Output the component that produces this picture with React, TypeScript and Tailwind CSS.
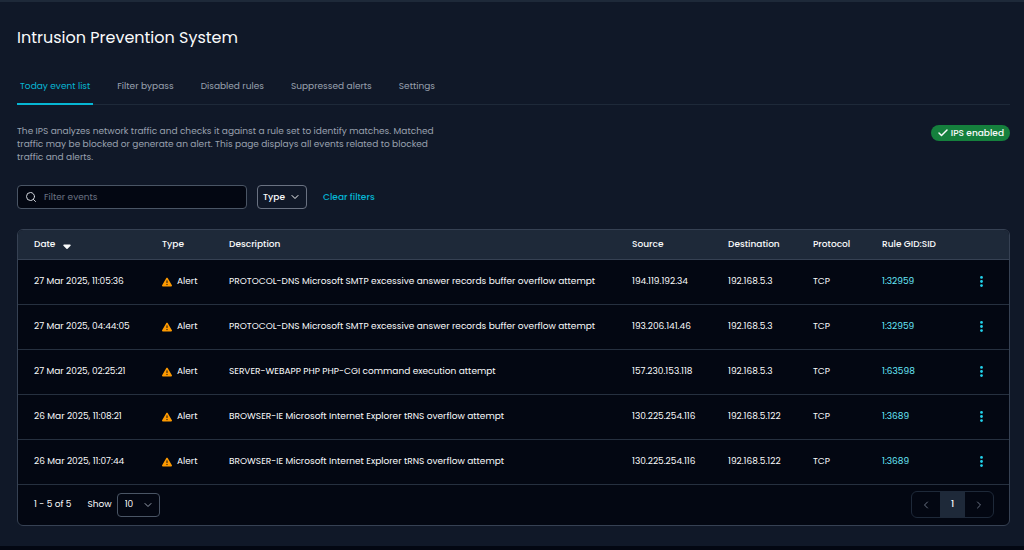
import { useState } from "react";
import { Check, ChevronDown, ChevronLeft, ChevronRight, Search } from "lucide-react";
import {
  FaCaretDown,
  FaEllipsisVertical,
  FaTriangleExclamation,
} from "react-icons/fa6";

interface IpsEvent {
  id: number;
  date: string;
  description: string;
  source: string;
  destination: string;
  protocol: string;
  rule: string;
}

const TABS = [
  "Today event list",
  "Filter bypass",
  "Disabled rules",
  "Suppressed alerts",
  "Settings",
];

const EVENTS: IpsEvent[] = [
  {
    id: 1,
    date: "27 Mar 2025, 11:05:36",
    description:
      "PROTOCOL-DNS Microsoft SMTP excessive answer records buffer overflow attempt",
    source: "194.119.192.34",
    destination: "192.168.5.3",
    protocol: "TCP",
    rule: "1:32959",
  },
  {
    id: 2,
    date: "27 Mar 2025, 04:44:05",
    description:
      "PROTOCOL-DNS Microsoft SMTP excessive answer records buffer overflow attempt",
    source: "193.206.141.46",
    destination: "192.168.5.3",
    protocol: "TCP",
    rule: "1:32959",
  },
  {
    id: 3,
    date: "27 Mar 2025, 02:25:21",
    description: "SERVER-WEBAPP PHP PHP-CGI command execution attempt",
    source: "157.230.153.118",
    destination: "192.168.5.3",
    protocol: "TCP",
    rule: "1:63598",
  },
  {
    id: 4,
    date: "26 Mar 2025, 11:08:21",
    description: "BROWSER-IE Microsoft Internet Explorer tRNS overflow attempt",
    source: "130.225.254.116",
    destination: "192.168.5.122",
    protocol: "TCP",
    rule: "1:3689",
  },
  {
    id: 5,
    date: "26 Mar 2025, 11:07:44",
    description: "BROWSER-IE Microsoft Internet Explorer tRNS overflow attempt",
    source: "130.225.254.116",
    destination: "192.168.5.122",
    protocol: "TCP",
    rule: "1:3689",
  },
];

function Tabs() {
  const [active, setActive] = useState(TABS[0]);

  return (
    <nav className="mt-[18px] flex gap-[21px] border-b border-gray-800">
      {TABS.map((tab) => (
        <button
          key={tab}
          onClick={() => setActive(tab)}
          className={
            tab === active
              ? "-mb-px border-b-2 border-[#06b6d4] px-[3px] pt-3 pb-[10px] text-[#06b6d4]"
              : "-mb-px border-b-2 border-transparent px-[3px] pt-3 pb-[10px] text-gray-400"
          }
        >
          {tab}
        </button>
      ))}
    </nav>
  );
}

function EventsTable({ events }: { events: IpsEvent[] }) {
  return (
    <div className="overflow-x-auto">
      <table className="w-full min-w-[960px] table-fixed text-left whitespace-nowrap">
        <colgroup>
          <col className="w-[128px]" />
          <col className="w-[67px]" />
          <col />
          <col className="w-[96px]" />
          <col className="w-[85px]" />
          <col className="w-[69px]" />
          <col className="w-[88px]" />
          <col className="w-[55px]" />
        </colgroup>
        <thead className="bg-gray-800 text-gray-50">
          <tr className="h-[29px] border-b border-gray-700">
            <th className="pl-4 font-medium" aria-sort="descending">
              <button className="flex items-center gap-1.5">
                Date
                <FaCaretDown className="mt-1 size-3" />
              </button>
            </th>
            <th className="pl-4 font-medium">Type</th>
            <th className="pl-4 font-medium">Description</th>
            <th className="pl-4 font-medium">Source</th>
            <th className="pl-4 font-medium">Destination</th>
            <th className="pl-4 font-medium">Protocol</th>
            <th className="pl-4 font-medium">Rule GID:SID</th>
            <th aria-label="Actions" />
          </tr>
        </thead>
        <tbody className="text-gray-50">
          {events.map((event) => (
            <tr key={event.id} className="h-[45px] border-b border-gray-700/70">
              <td className="pl-4">{event.date}</td>
              <td className="pl-4">
                <div className="flex items-center gap-[5px]">
                  <FaTriangleExclamation className="size-2.5 text-amber-500" />
                  Alert
                </div>
              </td>
              <td className="pl-4">{event.description}</td>
              <td className="pl-4">{event.source}</td>
              <td className="pl-4">{event.destination}</td>
              <td className="pl-4">{event.protocol}</td>
              <td className="pl-4">
                <a href="#rule" className="text-[#67e8f9]">
                  {event.rule}
                </a>
              </td>
              <td>
                <button
                  aria-label="Event actions"
                  className="mx-auto flex size-5 items-center justify-center text-[#22d3ee]"
                >
                  <FaEllipsisVertical className="size-[13px]" />
                </button>
              </td>
            </tr>
          ))}
        </tbody>
      </table>
    </div>
  );
}

function Pagination() {
  return (
    <div className="flex h-10 items-center justify-between pr-[15px] pl-4 text-gray-50">
      <div className="flex items-center">
        <span>1 - 5 of 5</span>
        <label htmlFor="page-size" className="ml-4">
          Show
        </label>
        <div className="relative ml-[5px]">
          <select
            id="page-size"
            defaultValue="10"
            className="h-6 w-[43px] appearance-none rounded border border-gray-600 bg-gray-950 pl-[7px]"
          >
            <option>10</option>
            <option>25</option>
            <option>50</option>
          </select>
          <ChevronDown className="pointer-events-none absolute top-1.5 right-1.5 size-3 text-gray-400" />
        </div>
      </div>
      <div className="flex h-[27px] overflow-hidden rounded-md border border-gray-800">
        <button
          aria-label="Previous page"
          className="flex w-7 items-center justify-center text-gray-500"
        >
          <ChevronLeft className="size-3" />
        </button>
        <button className="w-[25px] bg-gray-800 font-medium">1</button>
        <button
          aria-label="Next page"
          className="flex w-7 items-center justify-center text-gray-500"
        >
          <ChevronRight className="size-3" />
        </button>
      </div>
    </div>
  );
}

export default function App() {
  const [filter, setFilter] = useState("");
  const events = EVENTS.filter((e) =>
    e.description.toLowerCase().includes(filter.toLowerCase())
  );

  return (
    <main className="min-h-screen border-t-2 border-b-4 border-t-gray-800 border-b-gray-950 bg-gray-900 pr-[14px] pb-5 pl-[17px] font-[Poppins,Inter,sans-serif] text-[9px] leading-[13px]">
      <h1 className="pt-6 text-[16px] leading-6 text-gray-50">
        Intrusion Prevention System
      </h1>
      <Tabs />
      <div className="mt-5 flex items-start justify-between">
        <p className="max-w-[430px] text-gray-400">
          The IPS analyzes network traffic and checks it against a rule set to
          identify matches. Matched traffic may be blocked or generate an alert.
          This page displays all events related to blocked traffic and alerts.
        </p>
        <span className="flex h-4 items-center gap-0.5 rounded-full bg-[#15803d] px-1.5 font-medium text-gray-50">
          <Check className="size-3" strokeWidth={3} />
          IPS enabled
        </span>
      </div>
      <div className="mt-[21px] flex items-center">
        <div className="relative">
          <Search
            className="absolute top-1.5 left-2 size-3 text-gray-300"
            strokeWidth={2}
          />
          <input
            type="text"
            aria-label="Filter events"
            placeholder="Filter events"
            value={filter}
            onChange={(e) => setFilter(e.target.value)}
            className="h-6 w-[230px] rounded border border-gray-600 bg-gray-950 pl-[26px] text-gray-50 placeholder:text-gray-500"
          />
        </div>
        <button className="ml-2.5 flex h-6 w-[50px] items-center justify-center gap-1 rounded border border-gray-500 font-medium text-gray-50">
          Type
          <ChevronDown className="size-3" />
        </button>
        <button
          onClick={() => setFilter("")}
          className="ml-4 font-medium text-[#06b6d4]"
        >
          Clear filters
        </button>
      </div>
      <section className="mt-5 overflow-hidden rounded-md border border-gray-700 bg-gray-950">
        <EventsTable events={events} />
        <Pagination />
      </section>
    </main>
  );
}
